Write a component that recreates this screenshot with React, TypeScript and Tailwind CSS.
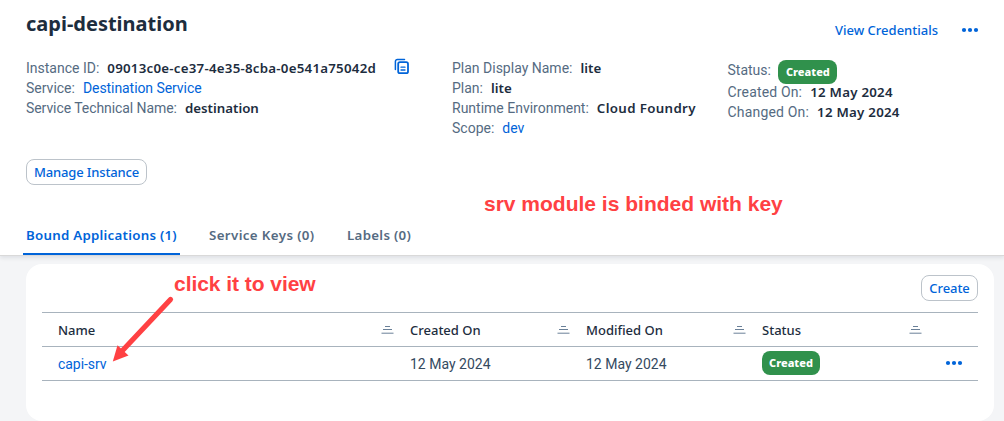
import type { ReactNode } from "react";

function Field({ label, children, labelClass = "" }: { label: string; children: ReactNode; labelClass?: string }) {
  return (
    <div className="flex h-5 items-center gap-2 leading-5">
      <span className={`text-[#556b82] ${labelClass}`}>{label}</span>
      {children}
    </div>
  );
}

function Value({ children, className = "" }: { children: ReactNode; className?: string }) {
  return (
    <span className={`font-['Noto_Sans',sans-serif] text-[13.3px] font-semibold text-[#1d2d3e] ${className}`}>
      {children}
    </span>
  );
}

function Badge({ className }: { className: string }) {
  return (
    <span
      className={`flex h-6 shrink-0 items-center justify-center rounded-lg bg-[#30914c] font-['Noto_Sans',sans-serif] text-[11px] font-extrabold text-white ${className}`}
    >
      Created
    </span>
  );
}

function Dots() {
  return (
    <svg width="18" height="6" viewBox="0 0 18 6" fill="#0064d9">
      <circle cx="3" cy="3" r="2.1" />
      <circle cx="9" cy="3" r="2.1" />
      <circle cx="15" cy="3" r="2.1" />
    </svg>
  );
}

function CopyIcon() {
  return (
    <svg width="16" height="17" viewBox="0 0 16 17" fill="none" stroke="#0064d9" strokeLinecap="round">
      <path d="M1.4 11.500V3.400a2 2 0 0 1 2-2H10.500" strokeWidth="1.5" />
      <rect x="4.200" y="4.200" width="9.800" height="11" rx="1.8" strokeWidth="1.8" />
      <path d="M7 9.200h4M7 12h4" strokeWidth="1.3" />
    </svg>
  );
}

function SortIcon() {
  return (
    <svg width="13" height="8" viewBox="0 0 13 8" stroke="#6a8098" strokeWidth="1">
      <path d="M4 0.5h5M2 3.5h9M0.5 7.2h12" />
    </svg>
  );
}

function HeaderCell({ children, className }: { children: ReactNode; className: string }) {
  return (
    <div className={`flex items-center justify-between pl-4 font-['Noto_Sans',sans-serif] text-[13px] font-medium text-[#1d2d3e] ${className}`}>
      <span className="pt-[2px]">{children}</span>
      <SortIcon />
    </div>
  );
}

export default function App() {
  return (
    <div className="relative flex h-[421px] w-[1004px] flex-col overflow-hidden bg-[#f4f5f7] font-['Roboto',sans-serif] text-sm whitespace-nowrap">
      <header className="z-10 flex h-64 shrink-0 flex-col border-b border-[#d9d9d9] bg-white pl-[26px] shadow-[0_2px_4px_rgba(34,53,72,0.1)]">
        <div className="flex h-[58px] items-start justify-between pr-[25px]">
          <h1 className="pt-[10px] font-['Noto_Sans',sans-serif] text-[20px] leading-7 font-bold text-[#1d2d3e]">
            capi-destination
          </h1>
          <div className="flex items-center gap-[23px] pt-5">
            <span className="font-['Noto_Sans',sans-serif] text-[13px] leading-5 font-medium text-[#0064d9]">
              View Credentials
            </span>
            <Dots />
          </div>
        </div>

        <div className="flex h-[101px] items-start">
          <div className="w-[426px]">
            <Field label="Instance ID:">
              <Value className="w-[269px] tracking-[0.24px]">09013c0e-ce37-4e35-8cba-0e541a75042d</Value>
              <span className="ml-[10px] -mt-1">
                <CopyIcon />
              </span>
            </Field>
            <Field label="Service:">
              <span className="tracking-[-0.07px] text-[#0064d9]">Destination Service</span>
            </Field>
            <Field label="Service Technical Name:" labelClass="tracking-[-0.07px]">
              <Value>destination</Value>
            </Field>
          </div>
          <div className="w-[275.500px]">
            <Field label="Plan Display Name:">
              <Value>lite</Value>
            </Field>
            <Field label="Plan:">
              <Value>lite</Value>
            </Field>
            <Field label="Runtime Environment:">
              <Value className="tracking-[0.35px]">Cloud Foundry</Value>
            </Field>
            <Field label="Scope:">
              <span className="text-[#0064d9]">dev</span>
            </Field>
          </div>
          <div>
            <div className="flex h-6 items-start gap-[7.500px] pt-[2px]">
              <span className="leading-5 text-[#556b82]">Status:</span>
              <Badge className="w-[59px]" />
            </div>
            <Field label="Created On:" labelClass="tracking-[0.16px]">
              <Value className="tracking-[0.24px]">12 May 2024</Value>
            </Field>
            <Field label="Changed On:" labelClass="tracking-[0.18px]">
              <Value className="tracking-[0.24px]">12 May 2024</Value>
            </Field>
          </div>
        </div>

        <button className="h-[26px] w-[121px] rounded-lg border border-[#bcc3ca] font-['Noto_Sans',sans-serif] text-[13px] font-medium tracking-[-0.15px] text-[#0064d9]">
          Manage Instance
        </button>

        <nav className="mt-auto flex h-[39px] font-['Noto_Sans',sans-serif] text-[13.3px] font-semibold text-[#556b82]">
          <div className="-ml-[3px] h-full w-[157px] rounded-t-xs border-b-2 border-[#0064d9] pl-[3px] leading-[38px] tracking-[0.25px] text-[#0064d9]">
            Bound Applications (1)
          </div>
          <div className="ml-[29px] w-[138px] leading-[38px] tracking-[0.38px]">Service Keys (0)</div>
          <div className="leading-[38px] tracking-[0.3px]">Labels (0)</div>
        </nav>
      </header>

      <main className="mt-2 mr-[10px] ml-[26px] h-[157px] rounded-2xl bg-white px-4">
        <div className="flex h-12 items-start justify-end pt-[11px]">
          <button className="h-[26px] w-[57px] rounded-lg border border-[#bcc3ca] font-['Noto_Sans',sans-serif] text-[13px] font-medium tracking-[-0.08px] text-[#0064d9]">
            Create
          </button>
        </div>
        <div className="flex h-[35px] border-y border-[#a8b3bd]">
          <HeaderCell className="w-[352px]">Name</HeaderCell>
          <HeaderCell className="w-44">Created On</HeaderCell>
          <HeaderCell className="w-44">Modified On</HeaderCell>
          <HeaderCell className="w-44">Status</HeaderCell>
        </div>
        <div className="flex h-[34px] items-center border-b border-[#a8b3bd] text-[#354a5f]">
          <div className="w-[352px] pt-px pl-4 tracking-[-0.05px] text-[#0064d9]">capi-srv</div>
          <div className="w-44 pt-px pl-4">12 May 2024</div>
          <div className="w-44 pt-px pl-4">12 May 2024</div>
          <div className="w-44 pb-px pl-4">
            <Badge className="w-[58px]" />
          </div>
          <div className="pb-px pl-[23px]">
            <Dots />
          </div>
        </div>
      </main>

      <div className="absolute top-[192px] left-[484px] z-20 font-['Liberation_Sans',sans-serif] text-[21px] leading-6 font-bold text-[#ff4143]">
        srv module is binded with key
      </div>
      <div className="absolute top-[272px] left-[174px] z-20 font-['Liberation_Sans',sans-serif] text-[21px] leading-6 font-bold tracking-[-0.05px] text-[#ff4143]">
        click it to view
      </div>
      <svg className="absolute top-[294px] left-[110px] z-20" width="66" height="70" viewBox="0 0 66 70">
        <path d="M60.500 5.500L13 56" stroke="#ff4143" strokeWidth="5.2" strokeLinecap="round" />
        <path d="M2.800 67.500L7.500 51.200L18.500 61.500Z" fill="#ff4143" />
      </svg>
    </div>
  );
}
